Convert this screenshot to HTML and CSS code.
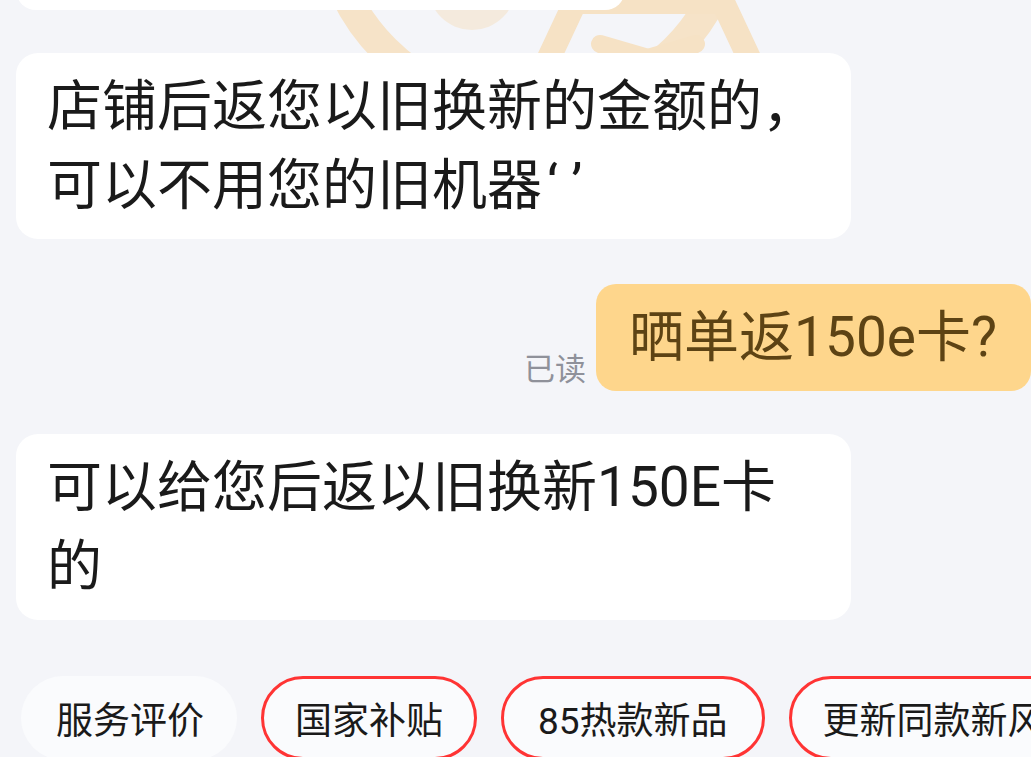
FILE: index.html
```html
<!DOCTYPE html>
<html lang="zh-cn">
  <head>
    <meta charset="utf8">
    <meta name="viewport" content="width=device-width, initial-scale=1">
    <title>聊天</title>
    <link rel="stylesheet" href="styles.css">
  </head>

  <body>
    <svg class="watermark" width="1031" height="60" viewBox="0 0 1031 60" aria-hidden="true">
      <circle cx="530" cy="-95" r="205" fill="none" stroke="#f6e3c8" stroke-width="30"/>
      <circle cx="472" cy="-14" r="44" fill="#f4eadd"/>
      <path d="M548 60 L578 -4 L720 -4 L750 60" fill="none" stroke="#f6e2c5" stroke-width="24" stroke-linejoin="round"/>
      <rect x="570" y="-4" width="160" height="18" fill="#f6e2c5"/>
      <path d="M600 44 L648 58 L696 44" fill="none" stroke="#f6e2c5" stroke-width="18" stroke-linecap="round" stroke-linejoin="round"/>
    </svg>

    <main class="chat">
      <div class="msg msg-other">
        <div class="bubble bubble-top" aria-hidden="true"></div>
      </div>

      <div class="msg msg-other">
        <p class="bubble">店铺后返您以旧换新的金额的，可以不用您的旧机器<span class="quote">‘’</span></p>
      </div>

      <div class="msg msg-self">
        <span class="read">已读</span>
        <p class="bubble bubble-self">晒单返150e卡?</p>
      </div>

      <div class="msg msg-other">
        <p class="bubble">可以给您后返以旧换新150E卡的</p>
      </div>

      <nav class="quick">
        <span class="chip">服务评价</span>
        <span class="chip chip-hot">国家补贴</span>
        <span class="chip chip-hot">85热款新品</span>
        <span class="chip chip-hot">更新同款新风格</span>
      </nav>
    </main>
  </body>
</html>
```

FILE: styles.css
```css
:root {
  font-family: Roboto, "Noto Sans CJK SC", sans-serif;
  color: #1a1a1a;
  background-color: #f4f5f9;
}

body {
  margin: 0;
  width: 1031px;
  height: 757px;
  overflow: hidden;
  position: relative;
}

.watermark {
  position: absolute;
  top: 0;
  left: 0;
  z-index: 0;
}

.chat {
  position: relative;
  z-index: 1;
  display: flex;
  flex-direction: column;
  gap: 43px;
  margin-top: -97px;
  padding-left: 16px;
}

.msg {
  display: flex;
}

.msg-self {
  justify-content: flex-end;
  align-items: flex-end;
  margin-top: 2px;
}

.bubble {
  margin: 0;
  max-width: 835px;
  box-sizing: border-box;
  padding: 14px 29px 14px 31px;
  background-color: #fff;
  border-radius: 22px;
  font-size: 55px;
  line-height: 79px;
}

.quote {
  padding-left: 5px;
  letter-spacing: 16px;
}

.bubble-top {
  width: 609px;
  height: 107px;
  border-radius: 20px;
}

.bubble-self {
  padding: 14px 34px 14px 33px;
  background-color: #fed68c;
  color: #5d4314;
  border-radius: 20px;
}

.read {
  font-size: 31px;
  line-height: 38px;
  color: #8f919a;
  margin: 0 10px 2px 0;
}

.quick {
  display: flex;
  gap: 24px;
  margin-top: 13px;
  padding-left: 5px;
}

.chip {
  flex-shrink: 0;
  display: flex;
  align-items: center;
  box-sizing: border-box;
  height: 84px;
  padding: 0 33px 0 35px;
  border-radius: 42px;
  background-color: #fafbfd;
  font-size: 37px;
  white-space: nowrap;
}

.chip-hot {
  border: 3px solid #ff3434;
  padding: 0 31px;
}

.chip-hot:nth-child(3) {
  padding: 0 34px;
}
```
